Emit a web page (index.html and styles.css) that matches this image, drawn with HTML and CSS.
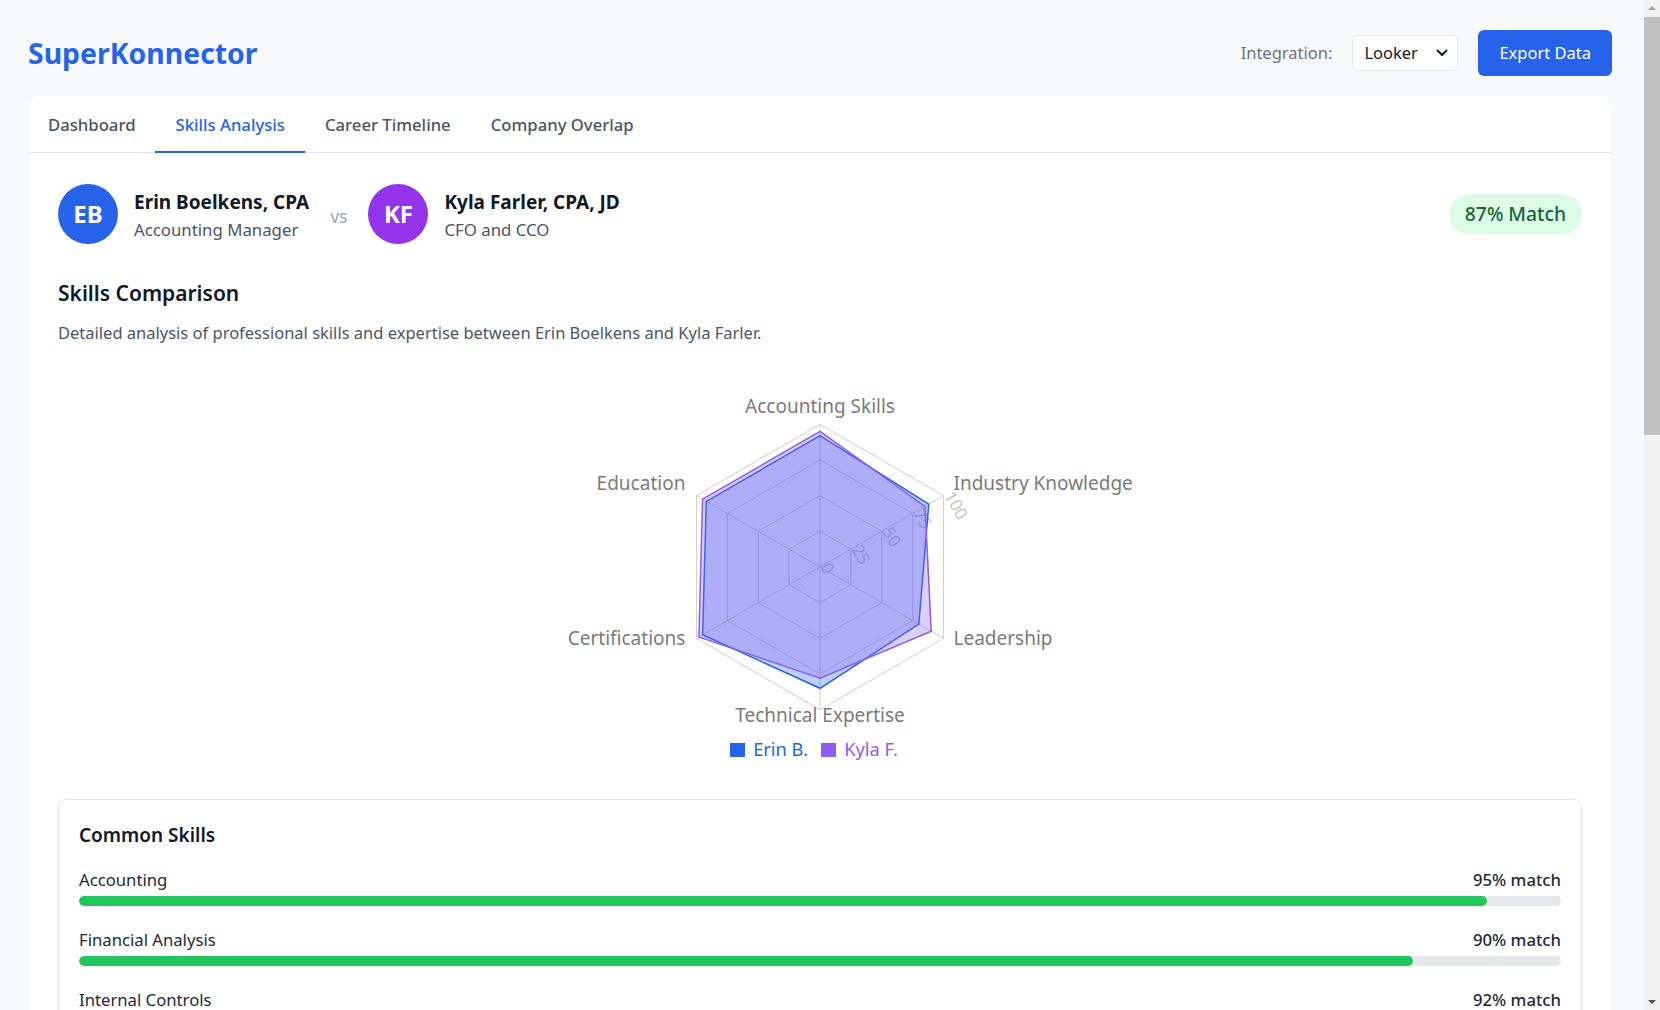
FILE: index.html
```html
<!DOCTYPE html>
<html lang="en">
<head>
<meta charset="utf-8">
<title>SuperKonnector – Skills Analysis</title>
<link rel="stylesheet" href="styles.css">
</head>
<body>
<div class="page">
  <header class="topbar">
    <h1 class="brand">SuperKonnector</h1>
    <div class="actions">
      <span class="int-label">Integration:</span>
      <div class="select">
        <span>Looker</span>
        <svg class="chev" width="12" height="8" viewBox="0 0 12 8"><path d="M1.5 1.5 L6 6 L10.5 1.5" fill="none" stroke="#111827" stroke-width="2" stroke-linecap="round" stroke-linejoin="round"/></svg>
      </div>
      <button class="btn">Export Data</button>
    </div>
  </header>

  <main class="panel">
    <nav class="tabs">
      <div class="tab">Dashboard</div>
      <div class="tab active">Skills Analysis</div>
      <div class="tab">Career Timeline</div>
      <div class="tab">Company Overlap</div>
    </nav>

    <section class="panel-body">
      <div class="profiles">
        <div class="people">
          <div class="person">
            <div class="avatar eb">EB</div>
            <div class="who">
              <div class="name">Erin Boelkens, CPA</div>
              <div class="role">Accounting Manager</div>
            </div>
          </div>
          <div class="vs">vs</div>
          <div class="person">
            <div class="avatar kf">KF</div>
            <div class="who">
              <div class="name">Kyla Farler, CPA, JD</div>
              <div class="role">CFO and CCO</div>
            </div>
          </div>
        </div>
        <div class="match">87% Match</div>
      </div>

      <h2 class="section-title">Skills Comparison</h2>
      <p class="section-desc">Detailed analysis of professional skills and expertise between Erin Boelkens and Kyla Farler.</p>

      <div class="chart">
        <svg class="radar" width="640" height="376" viewBox="0 0 640 376">
          <g class="grid" fill="none" stroke="#cccccc" stroke-width="1">
            <line x1="320" y1="207" x2="320" y2="64.3"/>
            <line x1="320" y1="207" x2="443.58" y2="135.65"/>
            <line x1="320" y1="207" x2="443.58" y2="278.35"/>
            <line x1="320" y1="207" x2="320" y2="349.7"/>
            <line x1="320" y1="207" x2="196.42" y2="278.35"/>
            <line x1="320" y1="207" x2="196.42" y2="135.65"/>
            <polygon points="320,171.33 350.9,189.16 350.9,224.84 320,242.68 289.1,224.84 289.1,189.16"/>
            <polygon points="320,135.65 381.79,171.32 381.79,242.68 320,278.35 258.21,242.68 258.21,171.32"/>
            <polygon points="320,99.98 412.69,153.49 412.69,260.51 320,314.03 227.31,260.51 227.31,153.49"/>
            <polygon points="320,64.3 443.58,135.65 443.58,278.35 320,349.7 196.42,278.35 196.42,135.65"/>
          </g>
          <g class="axis-label">
            <text x="320" y="52.8" text-anchor="middle">Accounting Skills</text>
            <text x="453.5" y="130.2" text-anchor="start">Industry Knowledge</text>
            <text x="453.5" y="285.2" text-anchor="start">Leadership</text>
            <text x="320" y="362" text-anchor="middle">Technical Expertise</text>
            <text x="185.4" y="285.2" text-anchor="end">Certifications</text>
            <text x="185.4" y="130.2" text-anchor="end">Education</text>
          </g>
          <g class="tick-label">
            <text x="320" y="207" transform="rotate(60 320 207)">0</text>
            <text x="350.9" y="189.16" transform="rotate(60 350.9 189.16)">25</text>
            <text x="381.79" y="171.32" transform="rotate(60 381.79 171.32)">50</text>
            <text x="412.69" y="153.49" transform="rotate(60 412.69 153.49)">75</text>
            <text x="443.58" y="135.65" transform="rotate(60 443.58 135.65)">100</text>
          </g>
          <polygon class="series" points="320,75.72 428.75,144.21 418.86,264.08 320,328.3 202.6,274.78 206.31,141.36" fill="#2563eb" fill-opacity="0.3" stroke="#2563eb" stroke-width="1.5"/>
          <polygon class="series" points="320,71.43 425.05,146.35 431.22,271.22 320,318.31 198.89,276.92 202.6,139.22" fill="#8b5cf6" fill-opacity="0.3" stroke="#8b5cf6" stroke-width="1.5"/>
        </svg>
        <ul class="legend">
          <li class="legend-item erin"><span class="swatch"></span>Erin B.</li>
          <li class="legend-item kyla"><span class="swatch"></span>Kyla F.</li>
        </ul>
      </div>

      <div class="card">
        <h3 class="card-title">Common Skills</h3>
        <div class="skill">
          <div class="skill-head"><span>Accounting</span><span class="pct">95% match</span></div>
          <div class="bar"><div class="fill" style="width:95%"></div></div>
        </div>
        <div class="skill">
          <div class="skill-head"><span>Financial Analysis</span><span class="pct">90% match</span></div>
          <div class="bar"><div class="fill" style="width:90%"></div></div>
        </div>
        <div class="skill">
          <div class="skill-head"><span>Internal Controls</span><span class="pct">92% match</span></div>
          <div class="bar"><div class="fill" style="width:92%"></div></div>
        </div>
        <div class="skill">
          <div class="skill-head"><span>Financial Reporting</span><span class="pct">88% match</span></div>
          <div class="bar"><div class="fill" style="width:88%"></div></div>
        </div>
        <div class="skill">
          <div class="skill-head"><span>Risk Management</span><span class="pct">85% match</span></div>
          <div class="bar"><div class="fill" style="width:85%"></div></div>
        </div>
        <div class="skill">
          <div class="skill-head"><span>Regulatory Compliance</span><span class="pct">82% match</span></div>
          <div class="bar"><div class="fill" style="width:82%"></div></div>
        </div>
      </div>

      <div class="unique-grid">
        <div class="card">
          <h3 class="card-title">Unique to Erin</h3>
          <div class="tags">
            <span class="tag blue">Process Improvement</span>
            <span class="tag blue">ERP Systems</span>
            <span class="tag blue">Account Reconciliation</span>
            <span class="tag blue">Team Training</span>
            <span class="tag blue">Month-End Close</span>
          </div>
        </div>
        <div class="card">
          <h3 class="card-title">Unique to Kyla</h3>
          <div class="tags">
            <span class="tag purple">Corporate Strategy</span>
            <span class="tag purple">Legal Compliance</span>
            <span class="tag purple">Board Reporting</span>
            <span class="tag purple">Investor Relations</span>
            <span class="tag purple">Mergers &amp; Acquisitions</span>
          </div>
        </div>
      </div>

      <div class="card">
        <h3 class="card-title">Skill Gap Analysis</h3>
        <div class="gap-row">
          <div class="skill-head"><span>Leadership</span><span class="pct">Erin 80 · Kyla 90</span></div>
          <div class="bar"><div class="fill blue-fill" style="width:80%"></div></div>
          <div class="bar"><div class="fill purple-fill" style="width:90%"></div></div>
        </div>
        <div class="gap-row">
          <div class="skill-head"><span>Technical Expertise</span><span class="pct">Erin 85 · Kyla 78</span></div>
          <div class="bar"><div class="fill blue-fill" style="width:85%"></div></div>
          <div class="bar"><div class="fill purple-fill" style="width:78%"></div></div>
        </div>
        <div class="gap-row">
          <div class="skill-head"><span>Industry Knowledge</span><span class="pct">Erin 88 · Kyla 85</span></div>
          <div class="bar"><div class="fill blue-fill" style="width:88%"></div></div>
          <div class="bar"><div class="fill purple-fill" style="width:85%"></div></div>
        </div>
        <div class="gap-row">
          <div class="skill-head"><span>Certifications</span><span class="pct">Erin 95 · Kyla 98</span></div>
          <div class="bar"><div class="fill blue-fill" style="width:95%"></div></div>
          <div class="bar"><div class="fill purple-fill" style="width:98%"></div></div>
        </div>
      </div>

      <div class="card">
        <h3 class="card-title">Recommendations</h3>
        <ul class="recs">
          <li>Pair Erin with Kyla on strategic planning initiatives to develop leadership skills.</li>
          <li>Leverage Erin's technical expertise for systems implementation projects.</li>
          <li>Both professionals share a strong foundation in accounting and internal controls.</li>
        </ul>
      </div>
    </section>
  </main>
</div>

<div class="scrollbar" aria-hidden="true">
  <div class="sb-up"></div>
  <div class="sb-thumb"></div>
  <div class="sb-down"></div>
</div>
</body>
</html>
```

FILE: styles.css
```css
* { box-sizing: border-box; }
html, body { margin: 0; }
body {
  background: #f8f9fb;
  font-family: "Noto Sans", "Open Sans", sans-serif;
  font-size: 16.5px;
  line-height: 24px;
  color: #1f2937;
}
.page { padding: 30px 48px 40px 28px; }

.topbar {
  display: flex;
  align-items: center;
  justify-content: space-between;
  height: 46px;
  margin-bottom: 20px;
}
.brand {
  margin: 0;
  font-size: 28.4px;
  line-height: 46px;
  font-weight: 700;
  color: #2563eb;
}
.actions { display: flex; align-items: center; gap: 20px; }
.int-label { color: #6b7280; }
.select {
  width: 106px;
  height: 36px;
  border: 1px solid #e5e7eb;
  border-radius: 5px;
  background: #fff;
  display: flex;
  align-items: center;
  justify-content: space-between;
  padding: 0 9px 0 11px;
  color: #111827;
}
.chev { display: block; }
.btn {
  height: 46px;
  padding: 0 21px;
  background: #2563eb;
  color: #fff;
  border: 0;
  border-radius: 6px;
  font: inherit;
}

.panel {
  background: #fff;
  border-radius: 12px;
  box-shadow: 0 1px 3px rgba(0, 0, 0, 0.06);
}
.tabs { display: flex; border-bottom: 1px solid #e5e7eb; }
.tab {
  padding: 17px 20px 14px;
  font-size: 16.7px;
  color: #4b5563;
  font-weight: 500;
  border-bottom: 2px solid transparent;
  margin-bottom: -1px;
}
.tab.active { color: #2563eb; border-bottom-color: #2563eb; }

.panel-body { padding: 31px 30px 30px; }

.profiles { display: flex; align-items: center; justify-content: space-between; }
.people { display: flex; align-items: center; gap: 20px; }
.person { display: flex; align-items: center; gap: 16px; }
.avatar {
  width: 60px;
  height: 60px;
  border-radius: 50%;
  display: flex;
  align-items: center;
  justify-content: center;
  color: #fff;
  font-weight: 700;
  font-size: 24px;
}
.avatar.eb { background: #2563eb; }
.avatar.kf { background: #9333ea; }
.who { display: flex; flex-direction: column; gap: 3px; margin-top: 2px; }
.name { font-size: 19px; line-height: 26px; font-weight: 700; color: #111827; }
.role { font-size: 16.8px; line-height: 24px; color: #4b5563; }
.vs { color: #9ca3af; font-size: 17.5px; margin: 4px 1px 0; }
.match {
  background: #dcfce7;
  color: #166534;
  font-size: 19.3px;
  line-height: 26px;
  font-weight: 500;
  padding: 7px 16px;
  border-radius: 999px;
}

.section-title {
  margin: 35px 0 0;
  font-size: 21px;
  line-height: 28px;
  font-weight: 600;
  color: #111827;
}
.section-desc { margin: 14px 0 0; color: #4b5563; }

.chart { margin-top: 15px; }
.radar { display: block; margin: 0 auto; overflow: visible; }
.axis-label text { font-size: 19px; fill: #7a7a7a; }
.tick-label text { font-size: 17px; fill: #c4c4c4; }
.legend {
  list-style: none;
  margin: 0;
  padding: 0 12px 0 0;
  display: flex;
  justify-content: center;
  gap: 13px;
  font-size: 18.3px;
  line-height: 25px;
}
.legend-item { display: flex; align-items: center; gap: 8px; }
.swatch { width: 15px; height: 14px; display: inline-block; margin-top: 3px; }
.legend-item.erin { color: #2563eb; }
.legend-item.erin .swatch { background: #2563eb; }
.legend-item.kyla { color: #8b5cf6; }
.legend-item.kyla .swatch { background: #8b5cf6; }

.card {
  margin-top: 38px;
  border: 1px solid #e5e7eb;
  border-radius: 8px;
  padding: 22px 20px 20px;
}
.card-title {
  margin: 0 0 20px;
  font-size: 19px;
  line-height: 26px;
  font-weight: 600;
  color: #111827;
}
.skill { font-size: 16.7px; }
.skill + .skill { margin-top: 22px; }
.skill-head { display: flex; justify-content: space-between; }
.pct { font-weight: 500; }
.bar {
  margin-top: 4px;
  height: 10px;
  background: #e5e7eb;
  border-radius: 5px;
  overflow: hidden;
}
.fill { height: 100%; background: #22c55e; border-radius: 5px; }
.blue-fill { background: #2563eb; }
.purple-fill { background: #8b5cf6; }

.unique-grid { display: grid; grid-template-columns: 1fr 1fr; gap: 24px; margin-top: 24px; }
.unique-grid .card { margin-top: 0; }
.tags { display: flex; flex-wrap: wrap; gap: 10px; }
.tag { padding: 6px 14px; border-radius: 999px; font-size: 15px; }
.tag.blue { background: #dbeafe; color: #1e40af; }
.tag.purple { background: #ede9fe; color: #5b21b6; }

.gap-row + .gap-row { margin-top: 22px; }
.gap-row .bar + .bar { margin-top: 6px; }

.recs { margin: 0; padding-left: 22px; color: #4b5563; }
.recs li + li { margin-top: 10px; }

/* emulated classic browser scrollbar */
.scrollbar {
  position: fixed;
  top: 0;
  right: 0;
  width: 16px;
  height: 100vh;
  background: #f1f1f1;
}
.sb-thumb {
  position: absolute;
  top: 17px;
  left: 0;
  right: 0;
  height: 418px;
  background: #c1c1c1;
}
.sb-up, .sb-down {
  position: absolute;
  left: 4px;
  width: 0;
  height: 0;
  border-left: 4px solid transparent;
  border-right: 4px solid transparent;
}
.sb-up { top: 6px; border-bottom: 4px solid #a3a3a3; }
.sb-down { bottom: 6px; border-top: 4px solid #505050; }
```
